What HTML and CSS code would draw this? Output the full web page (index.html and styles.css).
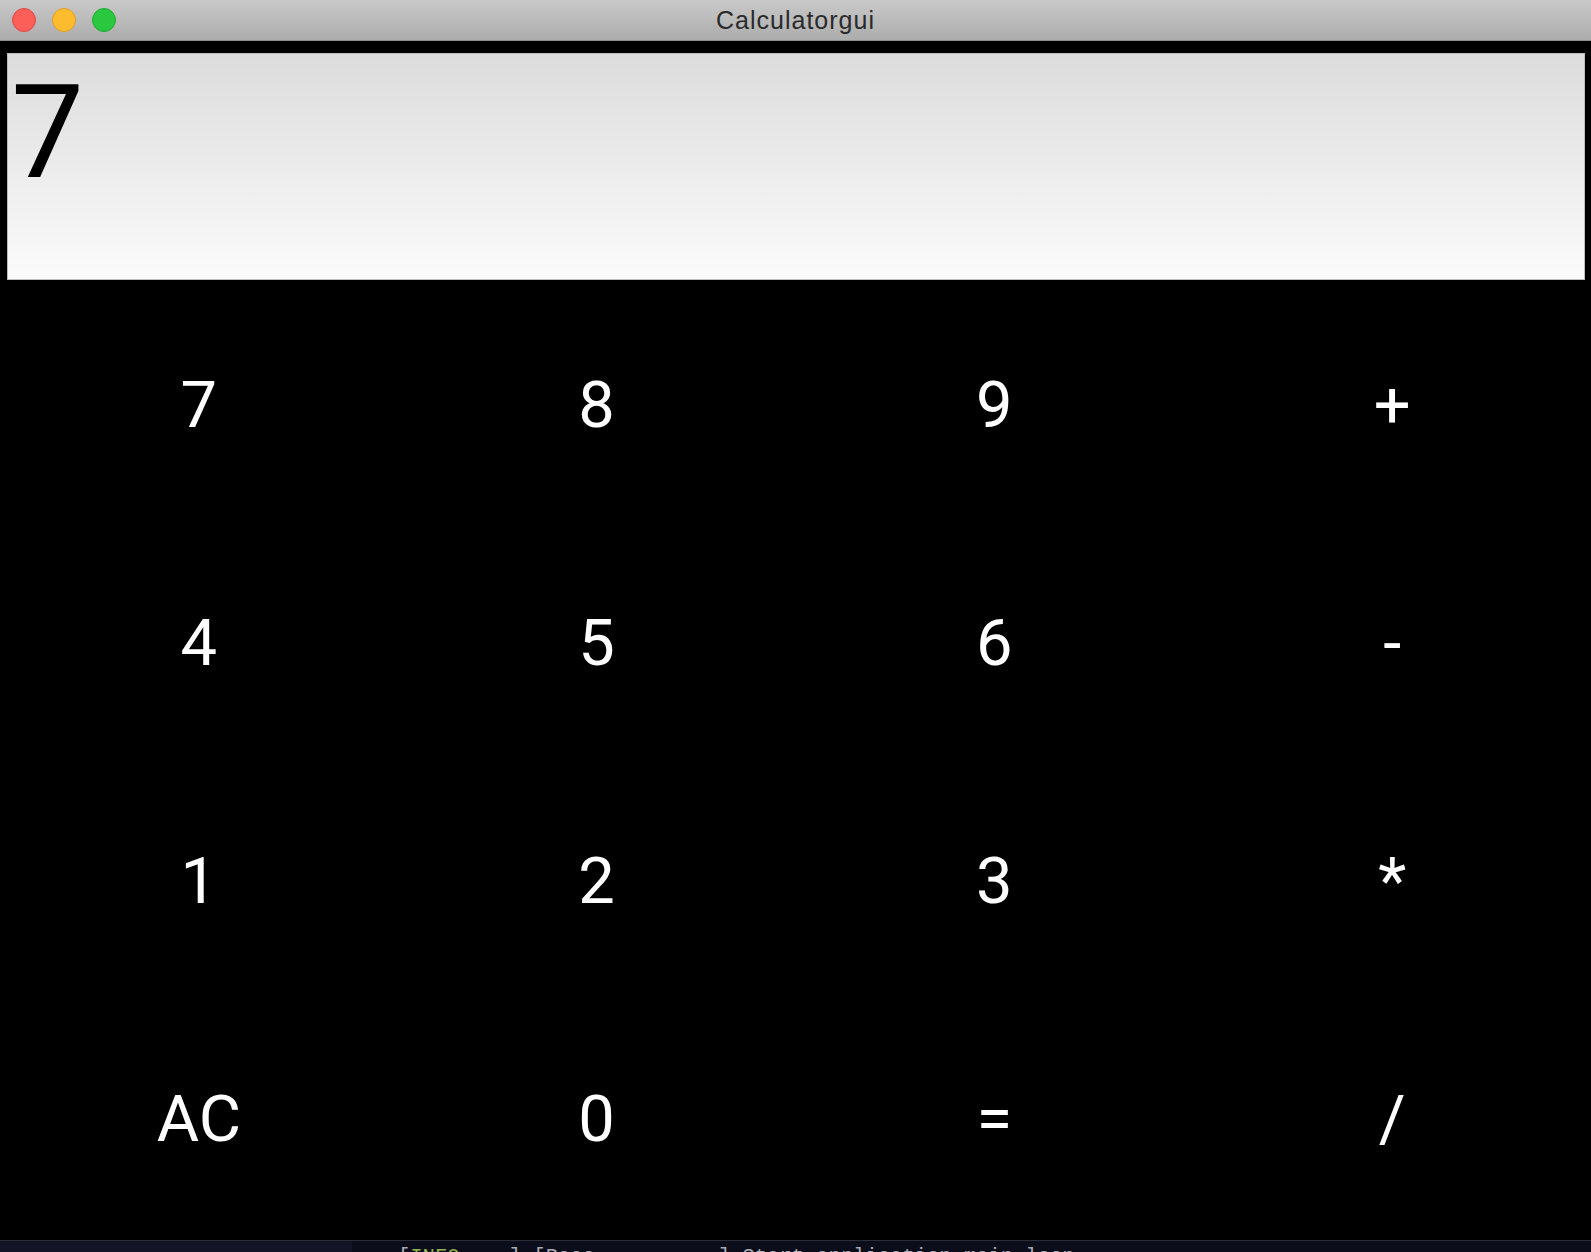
FILE: index.html
```html
<!DOCTYPE html>
<html lang="en">
<head>
<meta charset="utf-8">
<title>Calculatorgui</title>
<link rel="stylesheet" href="styles.css">
</head>
<body>
<div class="window">
  <header class="titlebar">
    <div class="lights">
      <span class="light red"></span>
      <span class="light yellow"></span>
      <span class="light green"></span>
    </div>
    <div class="title">Calculatorgui</div>
  </header>
  <main class="app">
    <div class="display"><span class="value">7</span></div>
    <div class="keys">
      <button class="key">7</button>
      <button class="key">8</button>
      <button class="key">9</button>
      <button class="key">+</button>
      <button class="key">4</button>
      <button class="key">5</button>
      <button class="key">6</button>
      <button class="key">-</button>
      <button class="key">1</button>
      <button class="key">2</button>
      <button class="key">3</button>
      <button class="key">*</button>
      <button class="key">AC</button>
      <button class="key">0</button>
      <button class="key">=</button>
      <button class="key">/</button>
    </div>
  </main>
  <footer class="terminal">
    <div class="term-left"></div>
    <div class="term-line"><span class="lvl">[<span class="info">INFO</span>    ]</span> [Base          ] Start application main loop</div>
  </footer>
</div>
</body>
</html>
```
FILE: styles.css
```css
html, body {
  margin: 0;
  padding: 0;
  background: #000;
}
body {
  width: 1591px;
  height: 1252px;
  overflow: hidden;
}
.window {
  display: flex;
  flex-direction: column;
  height: 1252px;
}
.titlebar {
  position: relative;
  height: 40px;
  flex: none;
  background: linear-gradient(#c9c9c9, #acacac);
  border-bottom: 1px solid #8e8e8e;
  display: flex;
  align-items: center;
  justify-content: center;
}
.lights {
  position: absolute;
  left: 12px;
  top: 8px;
  display: flex;
  gap: 16px;
}
.light {
  width: 24px;
  height: 24px;
  border-radius: 50%;
  box-sizing: border-box;
}
.red { background: #fc5f57; border: 1px solid #de4a43; }
.yellow { background: #fdbb2e; border: 1px solid #dea125; }
.green { background: #29c83f; border: 1px solid #1eab2f; }
.title {
  font-family: "Liberation Sans", Arial, sans-serif;
  font-size: 25px;
  letter-spacing: 1px;
  color: #2a2a2a;
  margin-top: 1px;
}
.app {
  flex: 1;
  background: #000;
  padding: 12px 6px 0 7px;
  display: flex;
  flex-direction: column;
}
.display {
  height: 227px;
  box-sizing: border-box;
  border: 1px solid #bdbdbd;
  background: linear-gradient(#dcdcdc, #fbfbfb);
  padding: 14px 0 0 3px;
}
.value {
  font-family: Roboto, "Noto Sans", sans-serif;
  font-size: 130px;
  line-height: 1;
  color: #000;
}
.keys {
  margin: 6px -6px 0 -7px;
  height: 952px;
  display: grid;
  grid-template-columns: repeat(4, 1fr);
  grid-template-rows: repeat(4, 1fr);
}
.key {
  background: #000;
  border: 0;
  padding: 0;
  margin: 0;
  color: #fff;
  font-family: Roboto, "Noto Sans", sans-serif;
  font-size: 65px;
  display: flex;
  align-items: center;
  justify-content: center;
}
.terminal {
  flex: none;
  height: 11px;
  border-top: 1px solid #2b2e3a;
  background: #0b0d1b;
  display: flex;
  overflow: hidden;
}
.term-left {
  width: 352px;
  flex: none;
  background: #131526;
}
.term-line {
  margin-left: 46px;
  padding-top: 5px;
  font-family: "Liberation Mono", monospace;
  font-size: 20.5px;
  line-height: 22px;
  color: #a9abb3;
  white-space: pre;
}
.info {
  color: #8fb651;
}
```
